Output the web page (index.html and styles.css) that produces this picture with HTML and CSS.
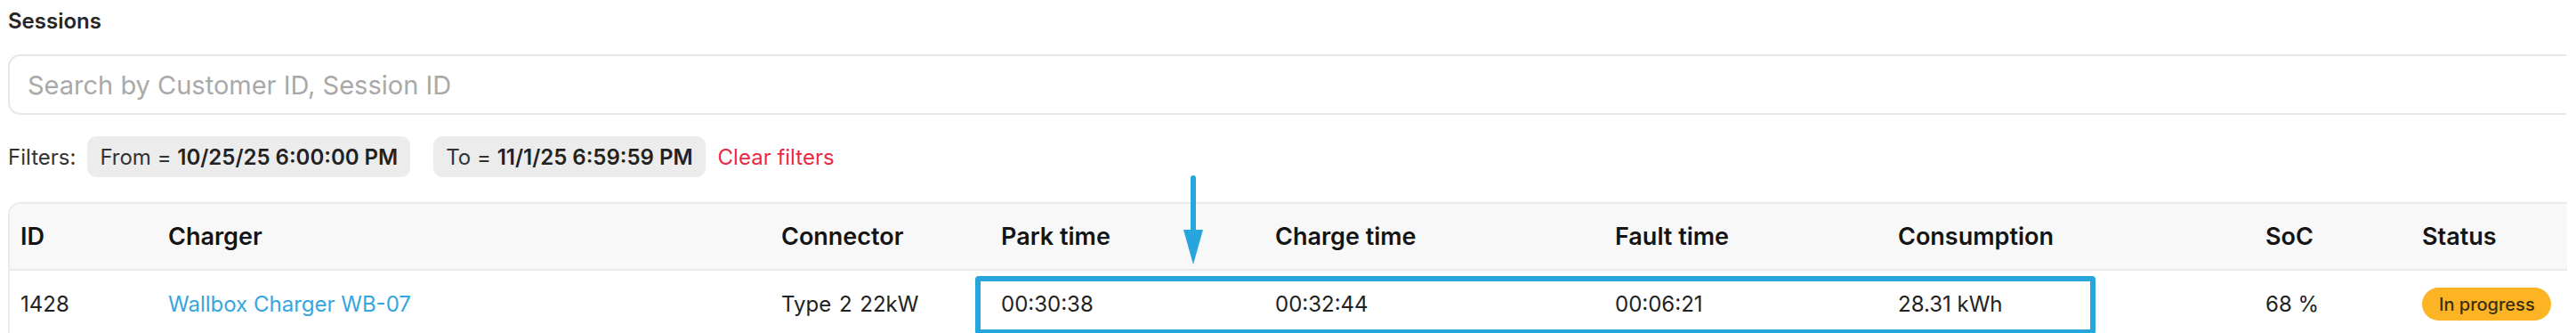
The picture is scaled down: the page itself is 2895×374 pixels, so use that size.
FILE: index.html
```html
<!DOCTYPE html>
<html lang="en">
<head>
<meta charset="utf-8">
<title>Sessions</title>
<link rel="stylesheet" href="styles.css">
</head>
<body>
<div class="page">
  <h1 class="title">Sessions</h1>
  <div class="search">
    <input class="search-input" type="text" placeholder="Search by Customer ID, Session ID">
  </div>
  <div class="filters">
    <span class="filters-label">Filters:</span>
    <span class="chip">From = <b>10/25/25 6:00:00 PM</b></span>
    <span class="chip">To = <b>11/1/25 6:59:59 PM</b></span>
    <a class="clear" href="#">Clear filters</a>
  </div>
  <div class="table-wrap">
    <table class="sessions">
      <colgroup>
        <col class="c-id"><col class="c-charger"><col class="c-conn"><col class="c-park"><col class="c-charge"><col class="c-fault"><col class="c-cons"><col class="c-soc"><col class="c-status">
      </colgroup>
      <thead>
        <tr>
          <th>ID</th><th>Charger</th><th>Connector</th><th>Park time</th><th>Charge time</th><th>Fault time</th><th>Consumption</th><th>SoC</th><th>Status</th>
        </tr>
      </thead>
      <tbody>
        <tr>
          <td>1428</td>
          <td><a class="link" href="#">Wallbox Charger WB-07</a></td>
          <td class="conn">Type 2 22kW</td>
          <td>00:30:38</td>
          <td>00:32:44</td>
          <td>00:06:21</td>
          <td>28.31 kWh</td>
          <td>68 %</td>
          <td><span class="badge">In progress</span></td>
        </tr>
      </tbody>
    </table>
  </div>
  <svg class="arrow" width="24" height="104" viewBox="0 0 24 104" aria-hidden="true">
    <line x1="12" y1="4" x2="12" y2="66" stroke="#27a6de" stroke-width="6" stroke-linecap="round"/>
    <polygon points="1,62 23,62 12,101" fill="#27a6de"/>
  </svg>
  <div class="highlight"></div>
</div>
</body>
</html>
```

FILE: styles.css
```css
* { box-sizing: border-box; }

html, body {
  margin: 0;
  background: #ffffff;
}

body {
  font-family: Inter, "Noto Sans", "Liberation Sans", sans-serif;
  color: #1f1f1f;
}

.page {
  position: relative;
  width: 2895px;
  height: 374px;
  padding-left: 9px;
  overflow: hidden;
}

.title {
  margin: 0;
  height: 48px;
  line-height: 48px;
  font-size: 24px;
  font-weight: 600;
  color: #262626;
}

.search {
  margin-top: 13px;
  width: 2875px;
  height: 68px;
  border: 2px solid #e7e7e7;
  border-right: none;
  border-radius: 14px 0 0 14px;
  display: flex;
  align-items: center;
  padding-left: 20px;
}

.search-input {
  border: none;
  outline: none;
  width: 100%;
  font-family: inherit;
  font-size: 29px;
  color: #333;
  background: transparent;
  padding: 0;
}

.search-input::placeholder {
  color: #a9a9a9;
}

.filters {
  margin-top: 24px;
  height: 46px;
  display: flex;
  align-items: center;
  font-size: 24px;
  color: #333;
}

.filters-label {
  margin-right: 13px;
}

.chip {
  height: 46px;
  display: inline-flex;
  align-items: center;
  padding: 0 14px 0 14px;
  background: #ececec;
  border-radius: 11px;
  color: #333;
  margin-right: 26px;
  white-space: pre;
}

.chip b {
  font-weight: 600;
  color: #222;
}

.chip + .chip {
  margin-right: 14px;
}

.clear {
  color: #ea2a44;
  text-decoration: none;
}

.table-wrap {
  margin-top: 28px;
  width: 2876px;
  border: 2px solid #ebebeb;
  border-right: none;
  border-bottom: none;
  border-radius: 14px 0 0 0;
  overflow: hidden;
}

.sessions {
  width: 100%;
  border-collapse: collapse;
  table-layout: fixed;
}

.c-id { width: 166px; }
.c-charger { width: 689px; }
.c-conn { width: 247px; }
.c-park { width: 308px; }
.c-charge { width: 382px; }
.c-fault { width: 318px; }
.c-cons { width: 413px; }
.c-soc { width: 176px; }
.c-status { width: auto; }

.sessions th {
  height: 74px;
  background: #f8f8f8;
  border-bottom: 2px solid #e9e9e9;
  text-align: left;
  font-size: 27px;
  font-weight: 600;
  color: #141414;
  padding: 0 0 0 12px;
}

.sessions td {
  height: 84px;
  font-size: 24px;
  color: #222;
  padding: 0 0 8px 12px;
  white-space: nowrap;
}

.sessions td.conn {
  word-spacing: 2px;
}

.link {
  color: #35a6df;
  text-decoration: none;
}

.badge {
  display: inline-flex;
  align-items: center;
  height: 37px;
  padding: 0 18px 0 19px;
  border-radius: 19px;
  background: #fcb424;
  font-size: 20px;
  font-weight: 500;
  color: #3b300c;
}

.arrow {
  position: absolute;
  left: 1329px;
  top: 196px;
}

.highlight {
  position: absolute;
  left: 1096px;
  top: 310px;
  width: 1259px;
  height: 66px;
  border: 6px solid #27a6de;
  border-radius: 4px;
}
```
